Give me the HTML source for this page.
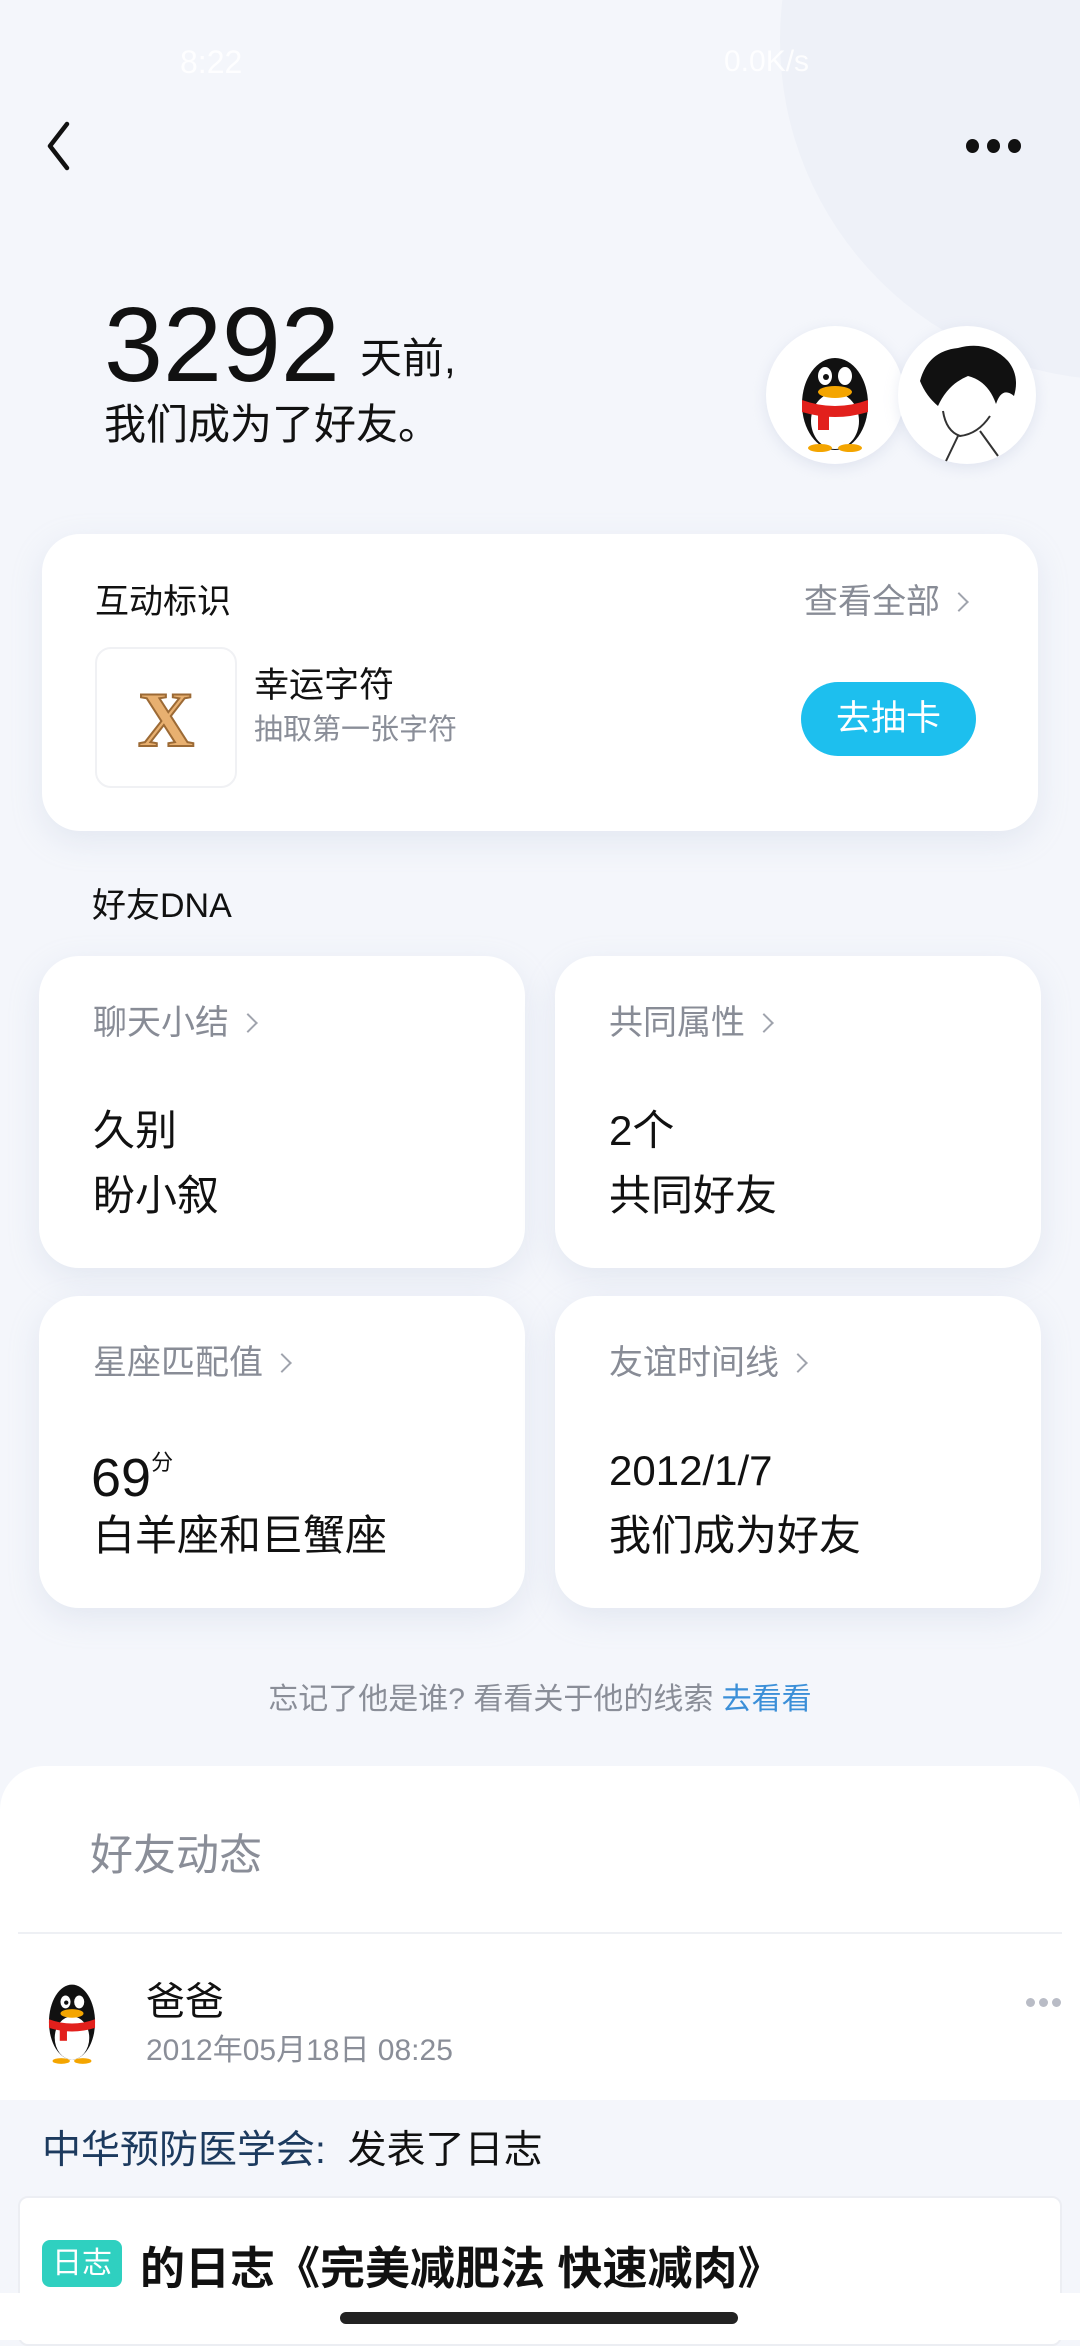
<!DOCTYPE html>
<html><head><meta charset="utf-8">
<style>
*{margin:0;padding:0;box-sizing:border-box}
body{width:1080px;height:2340px;overflow:hidden;background:#f4f6fb;font-family:"Liberation Sans","Noto Sans CJK SC",sans-serif;position:relative;color:#111}
.a{position:absolute;white-space:nowrap}
.card{position:absolute;background:#fff;border-radius:40px;box-shadow:0 10px 30px rgba(180,190,215,0.25)}
.lbl{font-size:34px;color:#888c96;line-height:34px}
.val{font-size:42px;color:#111;line-height:42px}
.chev{display:inline-block;width:14px;height:14px;border-top:2.5px solid #a0a4ad;border-right:2.5px solid #a0a4ad;transform:rotate(45deg);margin-left:12px;vertical-align:4px}
</style></head><body>
<div class="a" style="left:780px;top:-300px;width:680px;height:680px;border-radius:50%;background:#eef1f8"></div>
<div class="a" style="left:180px;top:46px;font-size:32px;color:rgba(255,255,255,.85);line-height:32px">8:22</div>
<div class="a" style="left:724px;top:46px;font-size:30px;color:rgba(255,255,255,.85);line-height:32px">0.0K/s</div>
<svg class="a" style="left:40px;top:120px" width="34" height="52"><path d="M27 4 L10 26 L27 48" fill="none" stroke="#111" stroke-width="4.5" stroke-linecap="round" stroke-linejoin="round"/></svg>
<div class="a" style="left:966px;top:139px;width:13px;height:14px;border-radius:50%;background:#111;box-shadow:21px 0 0 #111,42px 0 0 #111"></div>

<div class="a" style="left:104px;top:292px;font-size:106px;line-height:106px;color:#111">3292</div>
<div class="a" style="left:360px;top:338px;font-size:42px;line-height:42px">天前,</div>
<div class="a" style="left:104px;top:404px;font-size:42px;line-height:42px">我们成为了好友。</div>

<div class="a" style="left:766px;top:326px;width:138px;height:138px;border-radius:50%;background:#fff;box-shadow:0 4px 14px rgba(180,190,215,.3)">
<svg width="138" height="138" viewBox="0 0 138 138"><ellipse cx="69" cy="78" rx="33" ry="46" fill="#111"/><ellipse cx="69" cy="95" rx="24" ry="28" fill="#fff"/><ellipse cx="59" cy="50" rx="7" ry="9" fill="#fff"/><ellipse cx="79" cy="50" rx="7" ry="9" fill="#fff"/><circle cx="60" cy="51" r="3" fill="#111"/><ellipse cx="69" cy="66" rx="17" ry="6" fill="#f4a500"/><path d="M36 74 Q69 86 102 74 L102 86 Q69 96 36 86Z" fill="#e2201c"/><rect x="52" y="82" width="11" height="22" fill="#e2201c"/><ellipse cx="54" cy="122" rx="12" ry="4" fill="#f4a500"/><ellipse cx="84" cy="122" rx="12" ry="4" fill="#f4a500"/></svg></div>
<div class="a" style="left:898px;top:326px;width:138px;height:138px;border-radius:50%;background:#fff;box-shadow:0 4px 14px rgba(180,190,215,.3)">
<svg width="138" height="138" viewBox="0 0 138 138"><path d="M22 55 Q30 25 60 22 Q90 14 110 35 Q122 50 116 70 Q104 60 98 78 Q90 55 70 50 Q50 58 40 80 Q28 70 22 55Z" fill="#111"/><path d="M45 85 Q48 105 62 110 Q80 108 92 90" fill="none" stroke="#333" stroke-width="2"/><path d="M60 110 L48 135 M82 105 L100 130" stroke="#333" stroke-width="2"/></svg></div>

<div class="card" style="left:42px;top:534px;width:996px;height:297px;border-radius:38px"></div>
<div class="a" style="left:95px;top:585px;font-size:34px;line-height:34px">互动标识</div>
<div class="a" style="left:804px;top:585px;font-size:34px;line-height:34px;color:#888c96">查看全部<span class="chev"></span></div>
<div class="a" style="left:95px;top:647px;width:142px;height:141px;border:2px solid #f0f1f4;border-radius:16px;background:#fff;text-align:center;font-family:'Liberation Serif',serif;font-weight:bold;font-size:78px;line-height:141px;color:#e8b070;-webkit-text-stroke:2px #9c6a35">X</div>
<div class="a" style="left:254px;top:668px;font-size:35px;line-height:35px">幸运字符</div>
<div class="a" style="left:254px;top:716px;font-size:29px;line-height:29px;color:#8a8e98">抽取第一张字符</div>
<div class="a" style="left:801px;top:682px;width:175px;height:74px;border-radius:37px;background:#1dbfee;color:#fff;font-size:35px;line-height:74px;text-align:center">去抽卡</div>

<div class="a" style="left:92px;top:889px;font-size:34px;line-height:34px">好友DNA</div>

<div class="card" style="left:39px;top:956px;width:486px;height:312px"></div>
<div class="card" style="left:555px;top:956px;width:486px;height:312px"></div>
<div class="card" style="left:39px;top:1296px;width:486px;height:312px"></div>
<div class="card" style="left:555px;top:1296px;width:486px;height:312px"></div>

<div class="a lbl" style="left:93px;top:1006px">聊天小结<span class="chev"></span></div>
<div class="a val" style="left:93px;top:1110px">久别</div>
<div class="a val" style="left:93px;top:1175px">盼小叙</div>
<div class="a lbl" style="left:609px;top:1006px">共同属性<span class="chev"></span></div>
<div class="a val" style="left:609px;top:1110px">2个</div>
<div class="a val" style="left:609px;top:1175px">共同好友</div>
<div class="a lbl" style="left:93px;top:1346px">星座匹配值<span class="chev"></span></div>
<div class="a" style="left:91px;top:1436px;font-size:54px;line-height:54px">69<span style="font-size:22px;vertical-align:26px">分</span></div>
<div class="a val" style="left:93px;top:1515px">白羊座和巨蟹座</div>
<div class="a lbl" style="left:609px;top:1346px">友谊时间线<span class="chev"></span></div>
<div class="a val" style="left:609px;top:1450px">2012/1/7</div>
<div class="a val" style="left:609px;top:1515px">我们成为好友</div>

<div class="a" style="left:0;width:1080px;top:1685px;text-align:center;font-size:30px;line-height:30px;color:#8a8e98">忘记了他是谁? 看看关于他的线索 <span style="color:#3b8fd8">去看看</span></div>

<div class="a" style="left:0;top:1766px;width:1080px;height:574px;background:#fff;border-radius:44px 44px 0 0"></div>
<div class="a" style="left:90px;top:1835px;font-size:43px;line-height:43px;color:#8a8e98">好友动态</div>
<div class="a" style="left:18px;top:1932px;width:1044px;height:2px;background:#eef0f4"></div>
<svg class="a" style="left:36px;top:1976px" width="72" height="90" viewBox="0 0 100 125"><ellipse cx="50" cy="64" rx="32" ry="52" fill="#111"/><ellipse cx="50" cy="86" rx="24" ry="30" fill="#fff"/><ellipse cx="41" cy="36" rx="7" ry="9" fill="#fff"/><ellipse cx="60" cy="36" rx="7" ry="9" fill="#fff"/><circle cx="42" cy="37" r="3" fill="#111"/><ellipse cx="50" cy="52" rx="16" ry="6" fill="#f4a500"/><path d="M18 60 Q50 72 82 60 L82 72 Q50 82 18 72Z" fill="#e2201c"/><rect x="33" y="68" width="10" height="22" fill="#e2201c"/><ellipse cx="35" cy="118" rx="12" ry="4" fill="#f4a500"/><ellipse cx="65" cy="118" rx="12" ry="4" fill="#f4a500"/></svg>
<div class="a" style="left:146px;top:1983px;font-size:39px;line-height:39px">爸爸</div>
<div class="a" style="left:146px;top:2036px;font-size:30px;line-height:30px;color:#8a8e98">2012年05月18日 08:25</div>
<div class="a" style="left:1026px;top:1998px;width:9px;height:9px;border-radius:50%;background:#b9bcc6;box-shadow:13px 0 0 #b9bcc6,26px 0 0 #b9bcc6"></div>

<div class="a" style="left:0;top:2100px;width:1080px;height:240px;background:#f4f6fb"></div>
<div class="a" style="left:42px;top:2131px;font-size:39px;line-height:40px;color:#1c3a5e">中华预防医学会: <span style="color:#111">&nbsp;发表了日志</span></div>
<div class="a" style="left:18px;top:2196px;width:1044px;height:150px;background:#fff;border:2px solid #eceef3;border-radius:10px"></div>
<div class="a" style="left:42px;top:2240px;width:80px;height:47px;border-radius:8px;background:#2fd0c0;color:#fff;font-size:30px;line-height:47px;text-align:center">日志</div>
<div class="a" style="left:140px;top:2246px;font-size:45px;line-height:46px;font-weight:bold;color:#111">的日志《完美减肥法 快速减肉》</div>
<div class="a" style="left:0;top:2293px;width:1080px;height:47px;background:#fff"></div>
<div class="a" style="left:340px;top:2312px;width:398px;height:12px;border-radius:6px;background:#222"></div>
</body></html>
